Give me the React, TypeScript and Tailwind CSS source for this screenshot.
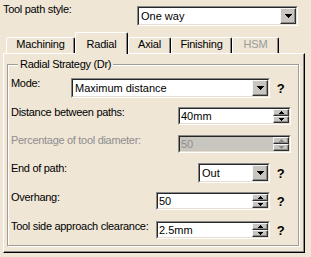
import React from "react";

const Arrow = ({ dir, w = 7, h = 4, color = "#000" }: { dir: "up" | "down"; w?: number; h?: number; color?: string }) => (
  <svg width={w} height={h} viewBox={`0 0 ${w} ${h}`} shapeRendering="crispEdges">
    <polygon points={dir === "down" ? `0,0 ${w},0 ${w / 2},${h}` : `0,${h} ${w},${h} ${w / 2},0`} fill={color} />
  </svg>
);

const Btn = ({ className = "", children }: { className?: string; children?: React.ReactNode }) => (
  <div
    className={`flex items-center justify-center bg-[#c8c5c0] border border-t-[#f6f6f6] border-l-[#f6f6f6] border-b-[#303030] border-r-[#303030] shadow-[inset_-1px_-1px_0_#8a8a8a] ${className}`}
  >
    {children}
  </div>
);

const Field = ({ className = "", disabled, children }: { className?: string; disabled?: boolean; children?: React.ReactNode }) => (
  <div className={`flex border border-t-[#8a8a8a] border-l-[#8a8a8a] border-b-white border-r-white ${className}`}>
    <div
      className={`flex flex-1 items-stretch border border-t-[#262626] border-l-[#262626] border-b-[#e4ddd0] border-r-[#e4ddd0] ${
        disabled ? "bg-[#c9c6c0] text-[#8e8e8e]" : "bg-white"
      }`}
    >
      {children}
    </div>
  </div>
);

const Combo = ({ value, className = "" }: { value: string; className?: string }) => (
  <Field className={`h-[20px] ${className}`}>
    <span className="flex-1 flex items-center pl-[2px] whitespace-nowrap">{value}</span>
    <Btn className="w-[16px]">
      <Arrow dir="down" />
    </Btn>
  </Field>
);

const Spinner = ({ value, disabled, className = "" }: { value: string; disabled?: boolean; className?: string }) => (
  <Field disabled={disabled} className={`h-[18px] ${className}`}>
    <span className="flex-1 flex items-center pl-[1px] whitespace-nowrap">{value}</span>
    <div className="flex flex-col w-[16px]">
      <Btn className="h-[7px]">
        <Arrow dir="up" w={5} h={3} color={disabled ? "#8a8a8a" : "#000"} />
      </Btn>
      <Btn className="h-[7px]">
        <Arrow dir="down" w={5} h={3} color={disabled ? "#8a8a8a" : "#000"} />
      </Btn>
    </div>
  </Field>
);

const Help = ({ h }: { h: string }) => (
  <span className={`w-[21px] ${h} flex items-center justify-center font-bold text-[13px]`}>?</span>
);

const tabs = [
  { label: "Machining", w: "w-[69px]" },
  { label: "Radial", w: "w-[53px]", active: true },
  { label: "Axial", w: "w-[43px]" },
  { label: "Finishing", w: "w-[61px]" },
  { label: "HSM", w: "w-[47px]", disabled: true },
];

export default function App() {
  return (
    <div className="w-[311px] h-[257px] overflow-hidden bg-[#efe6d6] pt-[6px] font-['Liberation_Sans',Arial,sans-serif] text-[11px] leading-[13px] text-black">
      <div className="flex items-start pl-[3px] pr-[13px]">
        <span className="flex-1 -mt-[3px] tracking-[-0.3px]">Tool path style:</span>
        <Combo value="One way" className="w-[161px]" />
      </div>

      <div className="flex items-end ml-[6px] mt-[6px] h-[21px]">
        {tabs.map((t) => (
          <div
            key={t.label}
            className={`${t.w} flex justify-center tracking-[-0.2px] rounded-t-[2px] border-t border-l border-r border-t-white border-l-white border-r-black shadow-[inset_-1px_0_0_#8a8a8a] bg-[#efe6d6] ${
              t.active ? "relative z-10 h-[22px] -mb-px pt-[5px]" : "h-[16px]"
            } ${t.disabled ? "text-[#9a9a9a]" : ""}`}
          >
            {t.label}
          </div>
        ))}
      </div>

      <div className="ml-[3px] w-[302px] h-[200px] border border-t-white border-l-white border-r-black border-b-black shadow-[inset_-1px_-1px_0_#8a8a8a] pt-[10px] pl-[3px]">
        <div className="relative w-[292px] border border-[#a29d94] shadow-[inset_1px_1px_0_#fff,1px_1px_0_#fff] pt-[13px] pb-[6px] pl-[3px] pr-[7px] tracking-[-0.3px]">
          <span className="absolute -top-[7px] left-[10px] px-[2px] bg-[#efe6d6]">Radial Strategy (Dr)</span>

          <div className="flex items-start h-[29px]">
            <span className="flex-1 -mt-px">Mode:</span>
            <Combo value="Maximum distance" className="w-[199px] tracking-normal" />
            <Help h="h-[20px]" />
          </div>

          <div className="flex items-start h-[28px]">
            <span className="flex-1 -mt-px">Distance between paths:</span>
            <Spinner value="40mm" className="w-[113px] tracking-normal" />
          </div>

          <div className="flex items-start h-[28px]">
            <span className="flex-1 -mt-px text-[#8e8e8e]">Percentage of tool diameter:</span>
            <Spinner value="50" disabled className="w-[113px] tracking-normal" />
          </div>

          <div className="flex items-start h-[29px]">
            <span className="flex-1 -mt-px">End of path:</span>
            <Combo value="Out" className="w-[72px] tracking-normal" />
            <Help h="h-[20px]" />
          </div>

          <div className="flex items-start h-[29px]">
            <span className="flex-1 -mt-px">Overhang:</span>
            <Spinner value="50" className="w-[114px] tracking-normal" />
            <Help h="h-[18px]" />
          </div>

          <div className="flex items-start h-[18px]">
            <span className="flex-1 -mt-px whitespace-nowrap">Tool side approach clearance:</span>
            <Spinner value="2.5mm" className="w-[114px] tracking-normal" />
            <Help h="h-[18px]" />
          </div>
        </div>
      </div>
    </div>
  );
}
